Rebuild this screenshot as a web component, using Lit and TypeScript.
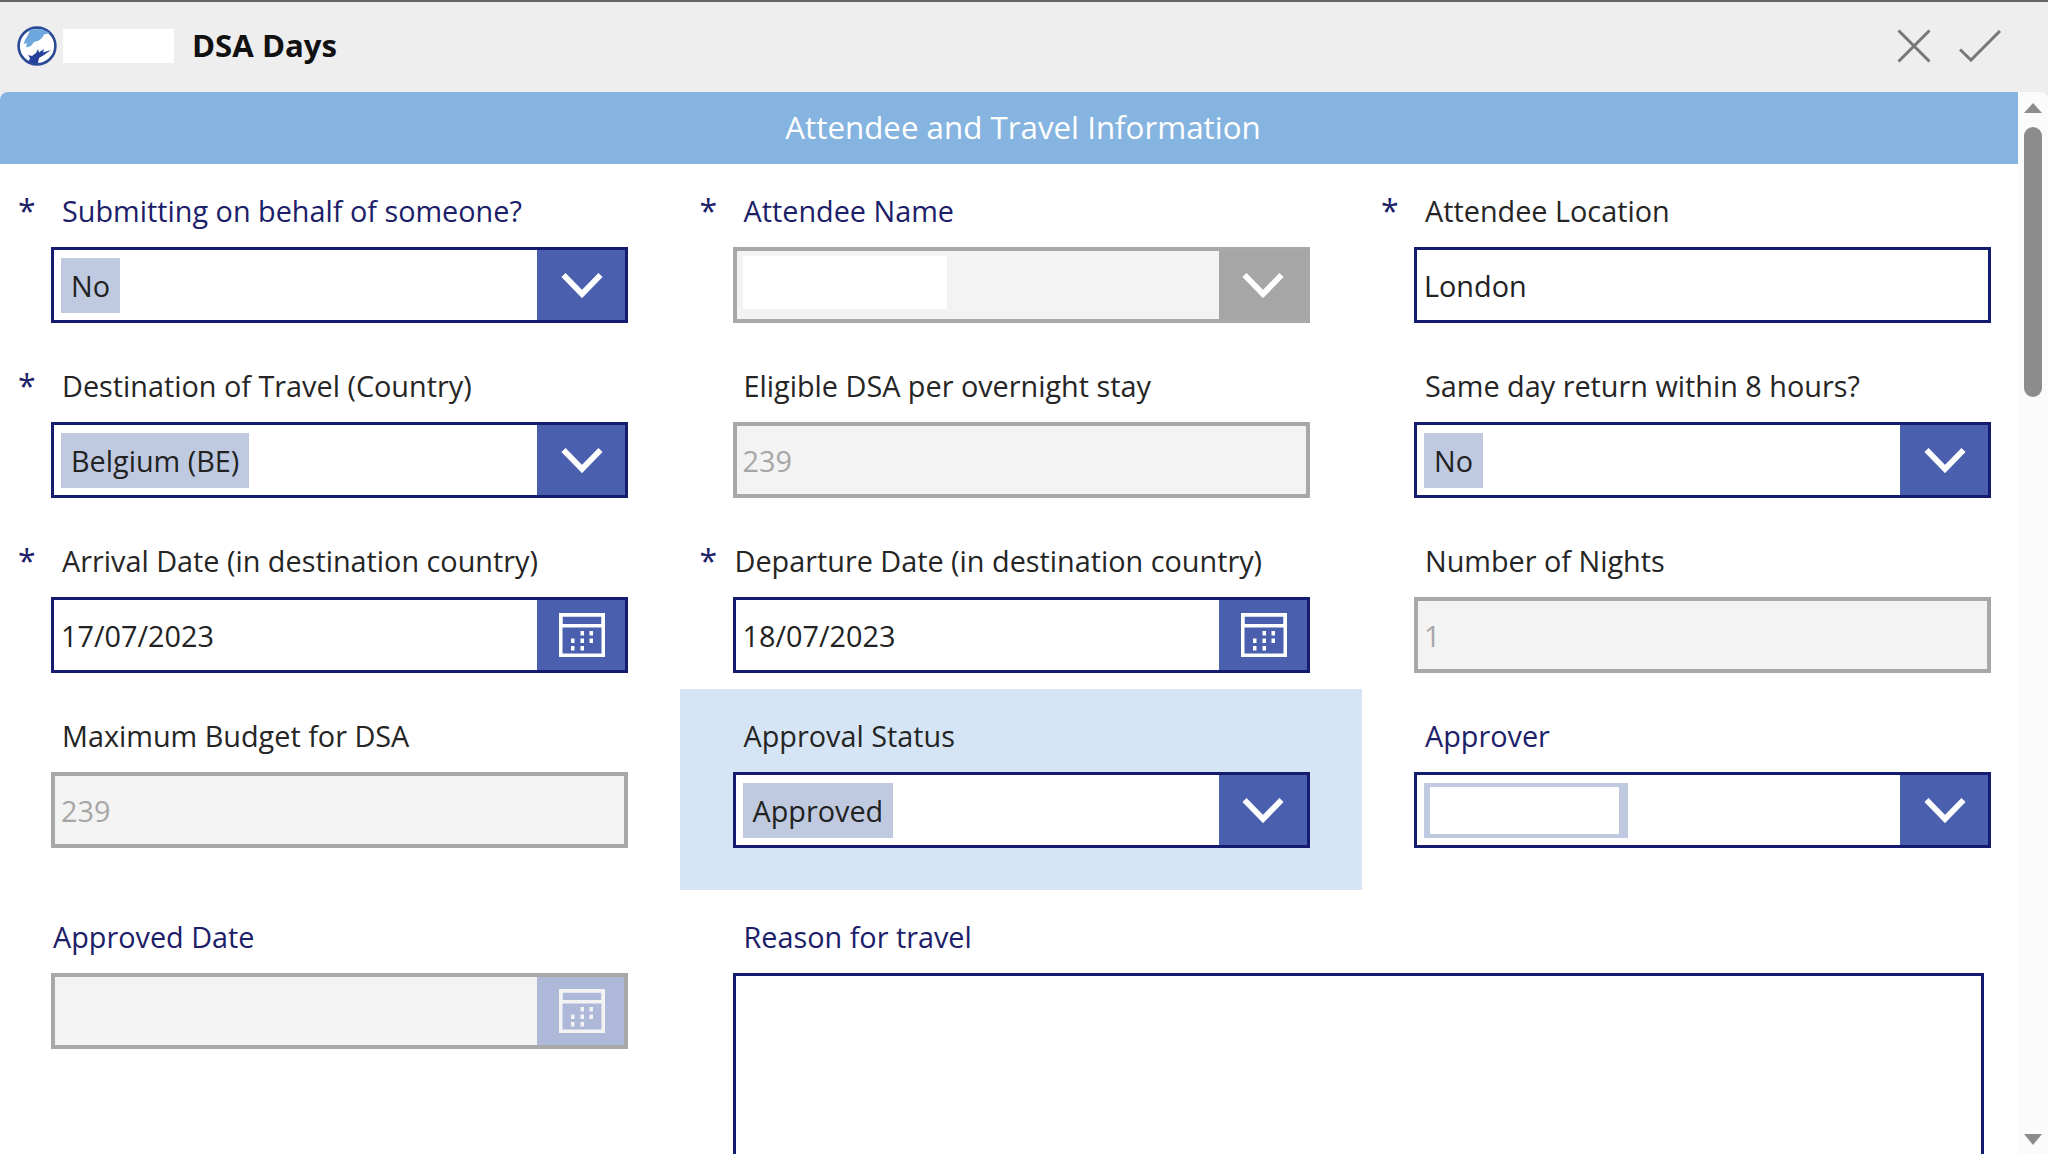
import { LitElement, html, css, svg, nothing } from "lit";
import { customElement } from "lit/decorators.js";

type Field = {
  label: string;
  tone?: "navy" | "ink";
  star?: boolean;
  labelClass?: string;
  kind: "select" | "text" | "date";
  value?: string;
  disabled?: boolean;
  chip?: boolean;
  redactChip?: boolean;
  redactPlain?: boolean;
  soft?: boolean;
  highlight?: boolean;
};

const fields: Field[] = [
  { label: "Submitting on behalf of someone?", tone: "navy", star: true, kind: "select", value: "No", chip: true },
  { label: "Attendee Name", tone: "navy", star: true, kind: "select", disabled: true, redactPlain: true },
  { label: "Attendee Location", star: true, kind: "text", value: "London" },
  { label: "Destination of Travel (Country)", star: true, labelClass: "", kind: "select", value: "Belgium (BE)", chip: true },
  { label: "Eligible DSA per overnight stay", kind: "text", value: "239", disabled: true },
  { label: "Same day return within 8 hours?", kind: "select", value: "No", chip: true },
  { label: "Arrival Date (in destination country)", star: true, kind: "date", value: "17/07/2023" },
  { label: "Departure Date (in destination country)", star: true, labelClass: "tight", kind: "date", value: "18/07/2023" },
  { label: "Number of Nights", kind: "text", value: "1", disabled: true },
  { label: "Maximum Budget for DSA", kind: "text", value: "239", disabled: true },
  { label: "Approval Status", kind: "select", value: "Approved", chip: true, highlight: true },
  { label: "Approver", tone: "navy", kind: "select", redactChip: true },
  { label: "Approved Date", tone: "navy", labelClass: "tight", kind: "date", disabled: true, soft: true },
];

const chevron = svg`<svg class="chev" viewBox="0 0 42 26" aria-hidden="true"><path d="M2.5 3 L21 22 L39.5 3" fill="none" stroke="#fff" stroke-width="5.8"/></svg>`;

const calendar = svg`<svg class="cal" viewBox="0 0 46 44" aria-hidden="true">
  <rect x="1.75" y="1.75" width="42.5" height="40.5" fill="none" stroke="currentColor" stroke-width="3.5"/>
  <rect x="1.75" y="1.75" width="42.5" height="11" fill="none" stroke="currentColor" stroke-width="3.5"/>
  <g fill="currentColor">
    <rect x="21.5" y="18" width="3.5" height="4.5"/><rect x="30.5" y="18" width="3.5" height="4.5"/>
    <rect x="12" y="25.5" width="3.5" height="4.5"/><rect x="21.5" y="25.5" width="3.5" height="4.5"/><rect x="30.5" y="25.5" width="3.5" height="4.5"/>
    <rect x="12" y="33" width="3.5" height="4.5"/><rect x="21.5" y="33" width="3.5" height="4.5"/>
  </g>
</svg>`;

const logo = svg`<svg class="logo" viewBox="0 0 40 40" aria-hidden="true">
  <circle cx="20" cy="20" r="18.4" fill="#fff" stroke="#2b4a96" stroke-width="2.6"/>
  <path d="M13 3.5 L25 3 L33 7 L27 8.5 L25 12 L21 15 L17 16 L14 20 L9 21.5 L10 17 L6.5 18 L8.5 13 L11 9 Z" fill="#6ea6de"/>
  <path d="M11 37 L13 32 L11 29 L15 30 L19 27 L21 23 L22 26.5 L27 23 L26 26.5 L34 24 L27 29 L22 32 L21 37 Z" fill="#24429b"/>
</svg>`;

@customElement("app-root")
export class AppRoot extends LitElement {
  static styles = css`
    :host {
      display: block;
      width: 2048px;
      height: 1154px;
      overflow: hidden;
      background: #eeeeee;
      font-family: "Open Sans", "Noto Sans", sans-serif;
      color: #222222;
    }
    .top {
      height: 92px;
      box-sizing: border-box;
      border-top: 2px solid #666666;
      display: flex;
      align-items: center;
      padding: 0 47px 0 17px;
    }
    .logo { width: 40px; height: 40px; margin-top: -2px; flex: none; }
    .redact-logo { width: 111px; height: 34px; background: #fff; margin: -2px 0 0 6px; flex: none; }
    .title { font-size: 31.2px; font-weight: 700; color: #111; margin-left: 18px; margin-top: -5px; }
    .actions { margin-left: auto; display: flex; gap: 28px; align-items: center; margin-top: -2px; }
    .actions svg { display: block; }
    .main { display: flex; height: 1062px; }
    .content {
      width: 2018px;
      flex: none;
      background: #fff;
      overflow: hidden;
      border-top-left-radius: 8px;
    }
    .rail {
      flex: 1;
      background: #fbfbfb;
      border-top-right-radius: 8px;
      display: flex;
      flex-direction: column;
      align-items: center;
      padding: 11px 0 9px;
      box-sizing: border-box;
    }
    .tri { width: 0; height: 0; border-left: 9px solid transparent; border-right: 9px solid transparent; }
    .tri.up { border-bottom: 10px solid #8c8c8c; }
    .tri.down { border-top: 11px solid #8c8c8c; margin-top: auto; }
    .thumb { width: 18px; height: 270px; border-radius: 9px; background: #8c8c8c; margin-top: 14px; }
    .banner {
      height: 72px;
      box-sizing: border-box;
      padding: 0 0 2px 28px;
      background: #86b4e1;
      color: #fff;
      font-size: 31.3px;
      display: flex;
      align-items: center;
      justify-content: center;
    }
    .form {
      display: grid;
      grid-template-columns: repeat(3, 577px);
      column-gap: 104.5px;
      padding: 0 0 0 51px;
    }
    .cell { padding-bottom: 16px; position: relative; min-width: 0; }
    .cell.hl {
      background: #d5e5f5;
      margin: 0 -52px 0 -53px;
      padding: 0 52px 42px 53px;
    }
    .label {
      height: 83px;
      box-sizing: border-box;
      padding: 28px 0 0 11px;
      font-size: 28.8px;
      line-height: 38px;
      white-space: nowrap;
      color: #252525;
    }
    .label.navy { color: #1b2068; }
    .label.tight { padding-left: 2px; }
    .star {
      position: absolute;
      left: -33px;
      top: 27px;
      font-size: 32px;
      line-height: 40px;
      color: #1b2068;
    }
    .box {
      height: 76px;
      box-sizing: border-box;
      border: 3px solid #151b6e;
      background: #fff;
      display: flex;
      align-items: stretch;
      font-size: 28.8px;
    }
    .box.off { border-width: 4px; border-color: #a8a8a8; background: #f3f3f3; color: #a6a6a6; }
    .val { flex: 1; min-width: 0; display: flex; align-items: center; padding: 1px 7px 0; white-space: nowrap; }
    .box.off .val { padding-left: 6px; }
    .chip { background: #bfcae1; height: 55px; padding: 0 10px; display: flex; align-items: center; color: #222; }
    .btn { width: 88px; flex: none; background: #4a60ae; display: flex; align-items: center; justify-content: center; color: #fff; }
    .box.off .btn { width: 87px; background: #a6a6a6; }
    .box.off .btn.soft { background: #aeb8d9; color: #f3f3f3; }
    .chev { width: 42px; height: 26px; display: block; margin-left: 1px; }
    .cal { width: 46px; height: 44px; display: block; margin-left: 2px; }
    .redact-plain { width: 204px; height: 53px; background: #fff; margin-top: -6px; }
    .chip.hollow { box-sizing: border-box; width: 204px; padding: 0; background: #fff; border: solid #bfcae1; border-width: 4px 9px 4px 6px; }
    .reason { grid-column: 2 / 4; }
    .area { height: 240px; width: 1251px; box-sizing: border-box; border: 3px solid #151b6e; background: #fff; }
  `;

  private renderValue(f: Field) {
    if (f.redactPlain) return html`<div class="redact-plain"></div>`;
    if (f.redactChip) return html`<div class="chip hollow"></div>`;
    if (!f.value) return nothing;
    return f.chip ? html`<div class="chip">${f.value}</div>` : html`${f.value}`;
  }

  private renderField(f: Field) {
    const labelCls = ["label", f.tone === "navy" ? "navy" : "", f.labelClass ?? ""].join(" ");
    return html`
      <div class="cell ${f.highlight ? "hl" : ""}">
        ${f.star ? html`<span class="star">*</span>` : nothing}
        <div class=${labelCls}>${f.label}</div>
        <div class="box ${f.disabled ? "off" : ""}">
          <div class="val">${this.renderValue(f)}</div>
          ${f.kind === "select" ? html`<div class="btn">${chevron}</div>` : nothing}
          ${f.kind === "date" ? html`<div class="btn ${f.soft ? "soft" : ""}">${calendar}</div>` : nothing}
        </div>
      </div>
    `;
  }

  render() {
    return html`
      <div class="top">
        ${logo}
        <div class="redact-logo"></div>
        <div class="title">DSA Days</div>
        <div class="actions">
          <svg width="34" height="34" viewBox="0 0 34 34" aria-hidden="true"><path d="M1.5 1.5 L32.5 32.5 M32.5 1.5 L1.5 32.5" stroke="#777" stroke-width="3" fill="none"/></svg>
          <svg width="42" height="32" viewBox="0 0 42 32" aria-hidden="true"><path d="M1 19.5 L12 30 L41 1" stroke="#777" stroke-width="3" fill="none"/></svg>
        </div>
      </div>
      <div class="main">
        <div class="content">
          <div class="banner">Attendee and Travel Information</div>
          <div class="form">
            ${fields.map((f) => this.renderField(f))}
            <div class="cell reason">
              <div class="label navy">Reason for travel</div>
              <div class="area"></div>
            </div>
          </div>
        </div>
        <div class="rail">
          <div class="tri up"></div>
          <div class="thumb"></div>
          <div class="tri down"></div>
        </div>
      </div>
    `;
  }
}
